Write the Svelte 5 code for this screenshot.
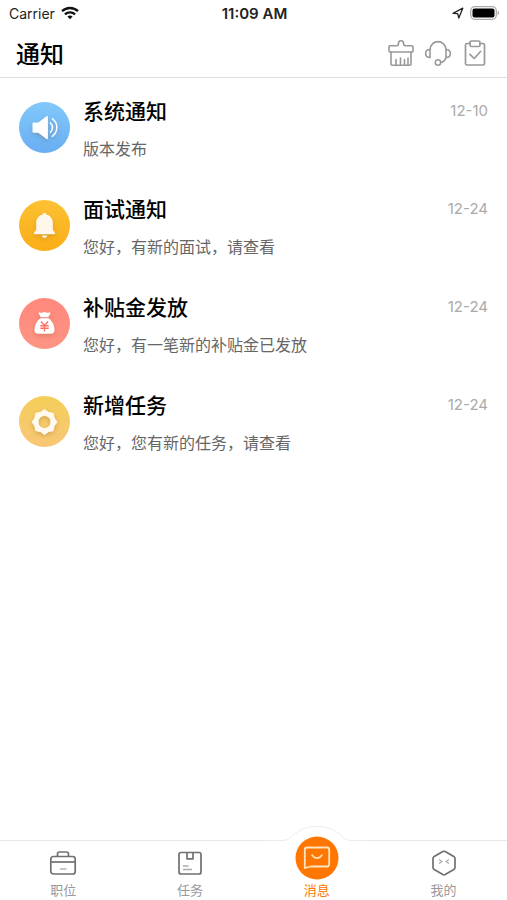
<script lang="ts">
  type Notice = { icon: string, title: string, text: string, date: string };

  const notices: Notice[] = [
    { icon: 'speaker', title: '系统通知', text: '版本发布', date: '12-10' },
    { icon: 'bell', title: '面试通知', text: '您好，有新的面试，请查看', date: '12-24' },
    { icon: 'money', title: '补贴金发放', text: '您好，有一笔新的补贴金已发放', date: '12-24' },
    { icon: 'gear', title: '新增任务', text: '您好，您有新的任务，请查看', date: '12-24' },
  ];

  const tabs = [
    { id: 'jobs', label: '职位' },
    { id: 'tasks', label: '任务' },
    { id: 'messages', label: '消息' },
    { id: 'mine', label: '我的' },
  ];

  let active = $state('messages');
</script>

<div class="page">
  <div class="statusbar">
    <div class="carrier">
      Carrier
      <svg width="18" height="14" viewBox="0 0 18 14" fill="none" stroke="#111" stroke-width="2.3">
        <path d="M1 5.2C5.5.9 12.500.9 17 5.200" />
        <path d="M3.900 8.300c2.900-2.700 7.300-2.700 10.200 0" />
        <path d="M6.400 10.500c1.500-1.300 3.700-1.300 5.200 0L9 13.200z" fill="#111" stroke="none" />
      </svg>
    </div>
    <div class="time">11:09 AM</div>
    <div class="power">
      <svg width="12" height="12" viewBox="0 0 12 12" fill="none" stroke="#222" stroke-width="1.300" stroke-linejoin="round">
        <path d="M1 6.300 10.800 1.200 6.800 11 5.700 6.700z" />
      </svg>
      <svg width="30" height="14" viewBox="0 0 30 14">
        <rect x=".7" y=".7" width="25.600" height="12.600" rx="4" fill="#fff" stroke="#aaa" stroke-width="1.300" />
        <rect x="2.500" y="2.500" width="22" height="9" rx="2" fill="#000" />
        <path d="M27.600 4.800c2 .7 2 3.700 0 4.400z" fill="#aaa" />
      </svg>
    </div>
  </div>

  <header>
    <h1>通知</h1>
    <div class="actions">
      <button aria-label="清除">
        <svg width="28" height="28" viewBox="0 0 28 28" fill="none" stroke="#999" stroke-width="1.600" stroke-linejoin="round" stroke-linecap="round">
          <path d="M3 6.800h6.500c1.500 0 2-.8 2-2.500 0-3.500 5-3.500 5 0 0 1.700.5 2.500 2 2.500H25a1 1 0 0 1 1 1v4.200a1 1 0 0 1-1 1H3a1 1 0 0 1-1-1V7.800a1 1 0 0 1 1-1z" />
          <path d="M4 13v12.200a1 1 0 0 0 1 1h18a1 1 0 0 0 1-1V13M9 26v-5.500M13.500 26v-7M17.500 26v-5.500M21 26v-7" />
        </svg>
      </button>
      <button aria-label="客服">
        <svg width="28" height="28" viewBox="0 0 28 28" fill="none" stroke="#999" stroke-width="1.600" stroke-linejoin="round" stroke-linecap="round">
          <path d="M6 10.500C7 0 21 0 22 10.500M22 18.500c-.8 2.800-2.500 4.500-5.400 5" />
          <path d="M6 10.500v8c-5.800 0-5.800-8 0-8zM22 10.500v8c5.800 0 5.800-8 0-8z" />
          <circle cx="14" cy="23.500" r="2.700" />
        </svg>
      </button>
      <button aria-label="待办">
        <svg width="28" height="28" viewBox="0 0 28 28" fill="none" stroke="#999" stroke-width="1.700" stroke-linejoin="round" stroke-linecap="round">
          <path d="M9 4.500H6A1.500 1.500 0 0 0 4.500 6v18.500A1.500 1.500 0 0 0 6 26h16a1.500 1.500 0 0 0 1.500-1.500V6A1.500 1.500 0 0 0 22 4.500h-3" />
          <rect x="9" y="2" width="10" height="5.500" rx="1.500" />
          <path d="m9 15.300 4.200 4.200 6.300-7" />
        </svg>
      </button>
    </div>
  </header>

  <main>
    {#each notices as notice}
      <a class="notice" href="#{notice.icon}">
        <div class="avatar {notice.icon}">
          <svg width="51" height="51" viewBox="0 0 51 51">
            {#if notice.icon === 'speaker'}
              <path d="M14.500 20.500h4.800l8.200-6.300c.7-.5 1.400-.2 1.400.7v21.400c0 .9-.7 1.200-1.400.7l-8.200-6.200h-4.800a1 1 0 0 1-1-1v-8.300a1 1 0 0 1 1-1z" fill="#fff" />
              <path d="M31.300 20.800c3 2.500 3 7 0 9.500M33.300 16.700c6 4.300 6 13.200 0 17.600" fill="none" stroke="#fff" stroke-width="1.500" stroke-linecap="round" />
            {:else if notice.icon === 'bell'}
              <path d="M25.500 12.800c1 0 1.700.7 1.900 1.700 3.900 1 6.400 4.100 6.400 8v7l2 3c.6.800.2 1.700-.8 1.700H16c-1 0-1.400-.9-.8-1.700l2-3v-7c0-3.900 2.500-7 6.400-8 .2-1 .9-1.700 1.900-1.700z" fill="#fff8ea" />
              <path d="M22.700 35.500h5.600c-.7 3.300-4.900 3.300-5.600 0z" fill="#fff8ea" />
            {:else if notice.icon === 'money'}
              <path d="M20.700 14.400c1.700.5 2.700.4 4.800-.4 2.100.8 3.100.9 4.800.4.900-.2 1.300.6.900 1.400l-2 3.500h-7.400l-2-3.500c-.4-.8 0-1.600.9-1.400z" fill="#fff" />
              <path d="M21.500 20.300h8c3.500 2.500 6 7 6 11.700 0 2.700-1.500 3.800-4 3.800h-12c-2.500 0-4-1.100-4-3.800 0-4.700 2.500-9.200 6-11.700z" fill="#fff" />
              <path d="m22 23.500 3.500 4 3.500-4M21.300 27.700h8.400M21.300 30.300h8.400M25.500 27.500v6" fill="none" stroke="#fb7264" stroke-width="1.400" />
            {:else}
              <path fill-rule="evenodd" d="M25.500 13.500 29.500 16.400 34.200 17.300 35.100 22 38 26 35.100 30 34.200 34.700 29.500 35.600 25.500 38.500 21.500 35.600 16.800 34.700 15.900 30 13 26 15.900 22 16.800 17.300 21.500 16.400zM25.500 19.500a6.500 6.500 0 1 0 0 13 6.500 6.500 0 0 0 0-13z" fill="#fffaf0" stroke="#fffaf0" stroke-linejoin="round" />
            {/if}
          </svg>
        </div>
        <div class="content">
          <div class="titleline">
            <h2>{notice.title}</h2>
            <time>{notice.date}</time>
          </div>
          <p>{notice.text}</p>
        </div>
      </a>
    {/each}
  </main>

  <nav>
    {#each tabs as tab}
      <button class="tab" class:active={tab.id === active} onclick={() => active = tab.id}>
        {#if tab.id === 'messages'}
          <svg class="bump" width="96" height="58" viewBox="0 0 96 58">
            <path d="M0 14.500h13c6 0 9-3 12.500-6.500 12-10 33-10 45 0C74 11.500 77 14.500 83 14.500h13V58H0z" fill="#fff" />
            <path d="M0 14.500h13c6 0 9-3 12.500-6.500 12-10 33-10 45 0C74 11.500 77 14.500 83 14.500h13" fill="none" stroke="#ececec" />
            <circle cx="48" cy="32" r="21.500" fill="#ff7600" />
            <path d="M38 21.500h20a2.200 2.200 0 0 1 2.200 2.200v14.600a2.200 2.200 0 0 1-2.200 2.200H41.500l-5.700 1.500V23.700a2.200 2.200 0 0 1 2.200-2.200z" fill="none" stroke="#ffe5bd" stroke-width="1.800" stroke-linejoin="round" />
            <path d="M43 29c2.500 4 7.500 4 10 0" fill="none" stroke="#ffe5bd" stroke-width="1.500" stroke-linecap="round" />
          </svg>
        {/if}
        <span class="tabicon">
          {#if tab.id === 'jobs'}
            <svg width="28" height="28" viewBox="0 0 28 28" fill="none" stroke="#707070" stroke-width="1.700" stroke-linejoin="round">
              <path d="M8.500 7.500V5a2 2 0 0 1 2-2h7a2 2 0 0 1 2 2v2.500" />
              <rect x="1.800" y="7.500" width="24.400" height="17.500" rx="2.500" />
              <path d="M2 13h24" />
              <path d="M11 20h6.500" stroke="#aaa" stroke-width="1.300" />
            </svg>
          {:else if tab.id === 'tasks'}
            <svg width="28" height="28" viewBox="0 0 28 28" fill="none" stroke="#707070" stroke-width="1.700" stroke-linejoin="round">
              <rect x="3" y="3.500" width="22" height="21.500" rx="2" />
              <path d="M11 3.500v6.300h6V3.500" />
              <path d="M7 17h5.500M7 20.500h9" stroke="#aaa" stroke-width="1.300" />
            </svg>
          {:else if tab.id === 'mine'}
            <svg width="28" height="28" viewBox="0 0 28 28" fill="none" stroke="#707070" stroke-width="1.700" stroke-linejoin="round">
              <path d="M12.800 2.600q1.200-.6 2.400 0l8.600 5q1.200.7 1.200 2v9q0 1.300-1.200 2l-8.600 4.900q-1.200.6-2.400 0l-8.600-4.900q-1.200-.7-1.200-2v-9q0-1.300 1.200-2z" />
              <path d="m9 10.500 3 2-3 2M19 10.500l-3 2 3 2" stroke="#aaa" stroke-width="1.200" />
            </svg>
          {/if}
        </span>
        <span class="label">{tab.label}</span>
      </button>
    {/each}
  </nav>
</div>

<style>
  :global(body) {
    margin: 0;
    background: #fff;
  }
  .page {
    display: flex;
    flex-direction: column;
    min-height: 100vh;
    overflow-x: hidden;
    font-family: "Noto Sans CJK SC", sans-serif;
    color: #000;
  }
  button {
    padding: 0;
    border: none;
    background: none;
    font-family: inherit;
    cursor: pointer;
  }
  svg {
    display: block;
  }
  .statusbar {
    display: grid;
    grid-template-columns: 1fr auto 1fr;
    align-items: center;
    height: 26px;
    padding: 0 7px 0 9px;
    font-family: Inter, sans-serif;
    font-size: 14px;
    color: #222;
  }
  .carrier, .power {
    display: flex;
    align-items: center;
    gap: 6px;
  }
  .power {
    justify-content: flex-end;
  }
  .time {
    font-size: 15px;
    font-weight: 600;
  }
  header {
    display: flex;
    align-items: center;
    justify-content: space-between;
    height: 52px;
    padding: 2px 18px 0 16px;
    box-sizing: border-box;
    border-bottom: 1px solid #ddd;
  }
  h1 {
    margin: 0;
    font-size: 24px;
    font-weight: 500;
    line-height: 36px;
  }
  .actions {
    display: flex;
    gap: 9px;
  }
  main {
    flex: 1;
  }
  .notice {
    display: flex;
    align-items: center;
    gap: 13px;
    padding: 17px 19px 16px;
    color: inherit;
    text-decoration: none;
  }
  .avatar {
    width: 51px;
    height: 51px;
    flex: none;
    border-radius: 50%;

    &.speaker {
      background: linear-gradient(#82c8fb, #68aef2);
    }
    &.bell {
      background: linear-gradient(#fcc133, #fbad17);
    }
    &.money {
      background: linear-gradient(#ff887c, #fd9583);
    }
    &.gear {
      background: linear-gradient(#f3ce58, #f9c777);
    }
    & svg {
      filter: drop-shadow(0 2px 2px rgba(110, 70, 30, .25));
    }
  }
  .content {
    flex: 1;
    min-width: 0;
  }
  .titleline {
    display: flex;
    justify-content: space-between;
    align-items: center;
    margin-bottom: 11px;
  }
  h2 {
    margin: 0;
    font-size: 21px;
    font-weight: 500;
    line-height: 30px;
  }
  time {
    font-family: Inter, sans-serif;
    font-size: 15px;
    color: #aaa;
  }
  p {
    margin: 0;
    font-size: 16px;
    line-height: 24px;
    color: #666;
  }
  nav {
    position: sticky;
    bottom: 0;
    display: grid;
    grid-template-columns: repeat(4, 1fr);
    height: 59px;
    border-top: 1px solid #e8e8e8;
    background: #fff;
  }
  .tab {
    position: relative;
    display: flex;
    flex-direction: column;
    align-items: center;
    padding-top: 8px;
    color: #999;

    &.active {
      color: #ff7600;
    }
  }
  .tabicon {
    height: 28px;
  }
  /* raised button sits over the top edge of the bar */
  .bump {
    position: absolute;
    top: -15px;
    left: calc(50% - 48px);
  }
  .label {
    position: relative;
    margin-top: 4px;
    font-size: 13px;
    line-height: 18px;
  }
</style>
